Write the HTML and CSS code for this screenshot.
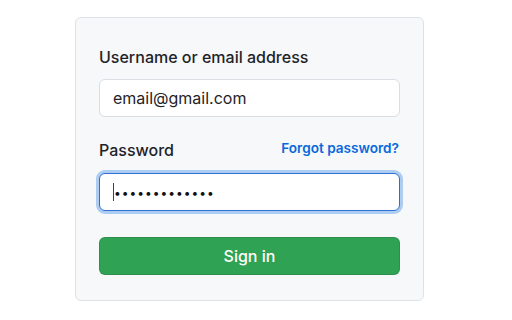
FILE: index.html
```html
<!DOCTYPE html>
<html lang="en">
<head>
<meta charset="utf-8">
<title>Sign in</title>
<link rel="stylesheet" href="styles.css">
</head>
<body>
<div class="page">
  <form class="card">
    <label class="label" for="login">Username or email address</label>
    <input class="field" id="login" type="text" value="email@gmail.com">
    <div class="pw-row">
      <label class="label" for="password">Password</label>
      <a class="forgot" href="#">Forgot password?</a>
    </div>
    <div class="field-wrap">
      <input class="field focused" id="password" type="password" value="aaaaaaaaaaaaa">
      <span class="caret"></span>
    </div>
    <button class="submit" type="button">Sign in</button>
  </form>
</div>
</body>
</html>
```
FILE: styles.css
```css
* { box-sizing: border-box; }
html, body { margin: 0; padding: 0; background: #ffffff; }
body {
  font-family: Inter, "Noto Sans", "Liberation Sans", sans-serif;
  color: #1f2328;
  width: 512px;
  height: 320px;
  overflow: hidden;
}
.page {
  padding: 17px 0 0 75px;
}
.card {
  width: 349px;
  height: 284px;
  background: #f6f8fa;
  border: 1px solid #dde2e7;
  border-radius: 6px;
  padding: 27px 23px 0 23px;
  display: flex;
  flex-direction: column;
}
.label {
  font-size: 16px;
  line-height: 24px;
  font-weight: 550;
  color: #1f2328;
}
.field {
  display: block;
  width: 100%;
  height: 38px;
  margin-top: 10px;
  padding: 0 13px;
  font-family: inherit;
  font-size: 16px;
  color: #1f2328;
  background: #ffffff;
  border: 1px solid #d8dee4;
  border-radius: 6px;
  outline: none;
}
.pw-row {
  margin-top: 21px;
  display: flex;
  justify-content: space-between;
  align-items: flex-start;
}
.forgot {
  font-size: 13.6px;
  line-height: 20px;
  font-weight: 600;
  color: #0969da;
  text-decoration: none;
  margin-right: 1px;
}
.field-wrap {
  position: relative;
  margin-top: 11px;
}
.field-wrap .field {
  margin-top: 0;
  font-size: 12px;
  letter-spacing: 1px;
  padding-left: 14px;
  color: #111;
}
.focused {
  border-color: #2f6fd3;
  box-shadow: 0 0 0 3px rgba(84, 150, 230, 0.45);
}
.caret {
  position: absolute;
  left: 14px;
  top: 10px;
  width: 1px;
  height: 18px;
  background: #444;
}
.submit {
  margin-top: 26px;
  height: 38px;
  width: 100%;
  background: #2fa353;
  color: #ffffff;
  border: 1px solid rgba(27, 31, 36, 0.15);
  border-radius: 6px;
  font-family: inherit;
  font-size: 16px;
  font-weight: 500;
}
```
